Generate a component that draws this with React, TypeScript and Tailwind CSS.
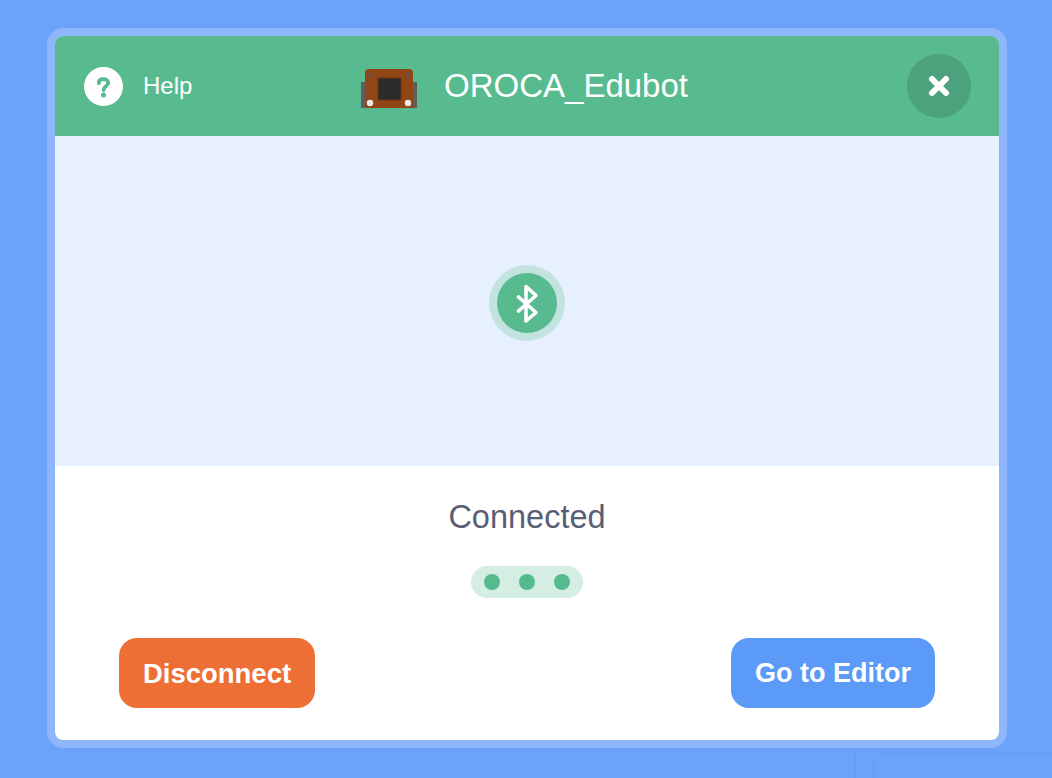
import React from 'react';

const font = { fontFamily: '"Liberation Sans", Arial, sans-serif' };

function BackgroundLines() {
  return (
    <svg className="absolute inset-0 pointer-events-none" width="1052" height="778" fill="none">
      <path d="M840 12.5h4a11 11 0 0 1 11 11V28" stroke="#5f97ee" strokeOpacity="0.3" />
      <path d="M873.5 28V23a11 11 0 0 1 11-11H1052" stroke="#5f97ee" strokeOpacity="0.3" />
      <path d="M1007 735h45" stroke="#5f97ee" strokeOpacity="0.3" />
      <path d="M873.5 778v-13a12 12 0 0 1 12-12H1052" stroke="#5f97ee" strokeOpacity="0.4" />
      <path d="M855.5 748v30" stroke="#5f97ee" strokeOpacity="0.4" />
    </svg>
  );
}

function RobotIcon() {
  return (
    <svg width="56" height="39" viewBox="0 0 56 39" className="shrink-0 mt-1">
      <rect x="0" y="13" width="56" height="26" fill="#5e5e62" />
      <path d="M4 39V4a4 4 0 0 1 4-4h40a4 4 0 0 1 4 4v35z" fill="#934615" />
      <rect x="8.5" y="3" width="3" height="7" rx="1" fill="#6b5240" />
      <rect x="45.5" y="3" width="3" height="7" rx="1" fill="#6b5240" />
      <rect x="17" y="9" width="23" height="22" fill="#2b2b2b" stroke="#6e3410" />
      <circle cx="9" cy="34" r="3.2" fill="#ece8e4" />
      <circle cx="47" cy="34" r="3.2" fill="#ece8e4" />
    </svg>
  );
}

function Dot() {
  return <span className="w-4 h-4 rounded-full bg-[#55bb8e]" />;
}

export default function App() {
  return (
    <div className="relative w-full h-[778px] overflow-hidden bg-[#6ca2f9] pt-7" style={font}>
      <BackgroundLines />
      <div className="relative ml-[47px] w-[960px] h-[720px] rounded-[16px] border-8 border-[#8eb6fb]">
        <div className="h-full rounded-[8px] overflow-hidden bg-white flex flex-col">
          <header className="h-[100px] shrink-0 bg-[#57bb8f] grid grid-cols-[1fr_auto_1fr] items-center text-white">
            <div className="flex items-center pl-[29px] gap-[20px]">
              <span className="w-[39px] h-[39px] rounded-full bg-white flex items-center justify-center">
                <svg width="39" height="39" viewBox="0 0 39 39" fill="none">
                  <path d="M14.8 16.2C14.8 13.2 16.8 12.2 19.5 12.2C22.2 12.2 24.2 13.6 24.2 16C24.2 19.2 19.5 19.2 19.5 23" stroke="#57bb8f" strokeWidth="3.8" strokeLinecap="round" />
                  <circle cx="19.5" cy="28" r="2.5" fill="#57bb8f" />
                </svg>
              </span>
              <span className="text-[24px]">Help</span>
            </div>
            <div className="flex items-center gap-[27px] pr-[5px]">
              <RobotIcon />
              <span className="text-[33px]">OROCA_Edubot</span>
            </div>
            <div className="flex justify-end pr-[28px]">
              <button className="w-16 h-16 rounded-full bg-[#4ca27c] flex items-center justify-center">
                <svg width="24" height="24" viewBox="0 0 24 24" fill="none">
                  <path d="M5 5l14 14M19 5L5 19" stroke="#fff" strokeWidth="6" strokeLinecap="round" />
                </svg>
              </button>
            </div>
          </header>

          <section className="h-[330px] shrink-0 bg-[#e6f0ff] flex items-center justify-center pt-1">
            <div className="w-[76px] h-[76px] rounded-full bg-[#c3e3e0] flex items-center justify-center">
              <div className="w-[60px] h-[60px] rounded-full bg-[#57bb8f] flex items-center justify-center">
                <svg width="34" height="40" viewBox="0 0 34 40" fill="none">
                  <path d="M8.5 14L26 29.5L16 38V3.5L26 12.5L8.5 28" stroke="#fff" strokeWidth="3.6" strokeLinejoin="round" strokeLinecap="round" />
                </svg>
              </div>
            </div>
          </section>

          <section className="flex-1 flex flex-col items-center">
            <p className="mt-[32px] text-[32.5px] leading-[38px] text-[#575e75]">Connected</p>
            <div className="mt-[30px] w-[112px] h-8 rounded-full bg-[#d4eee3] flex items-center justify-center gap-[19px]">
              <Dot />
              <Dot />
              <Dot />
            </div>
            <div className="mt-10 w-full px-16 flex justify-between">
              <button className="w-[196px] h-[70px] pt-px rounded-[18px] bg-[#ee6f35] text-white font-bold text-[27.5px]">Disconnect</button>
              <button className="w-[204px] h-[70px] pt-px rounded-[18px] bg-[#5b9af6] text-white font-bold text-[27px]">Go to Editor</button>
            </div>
          </section>
        </div>
      </div>
    </div>
  );
}
